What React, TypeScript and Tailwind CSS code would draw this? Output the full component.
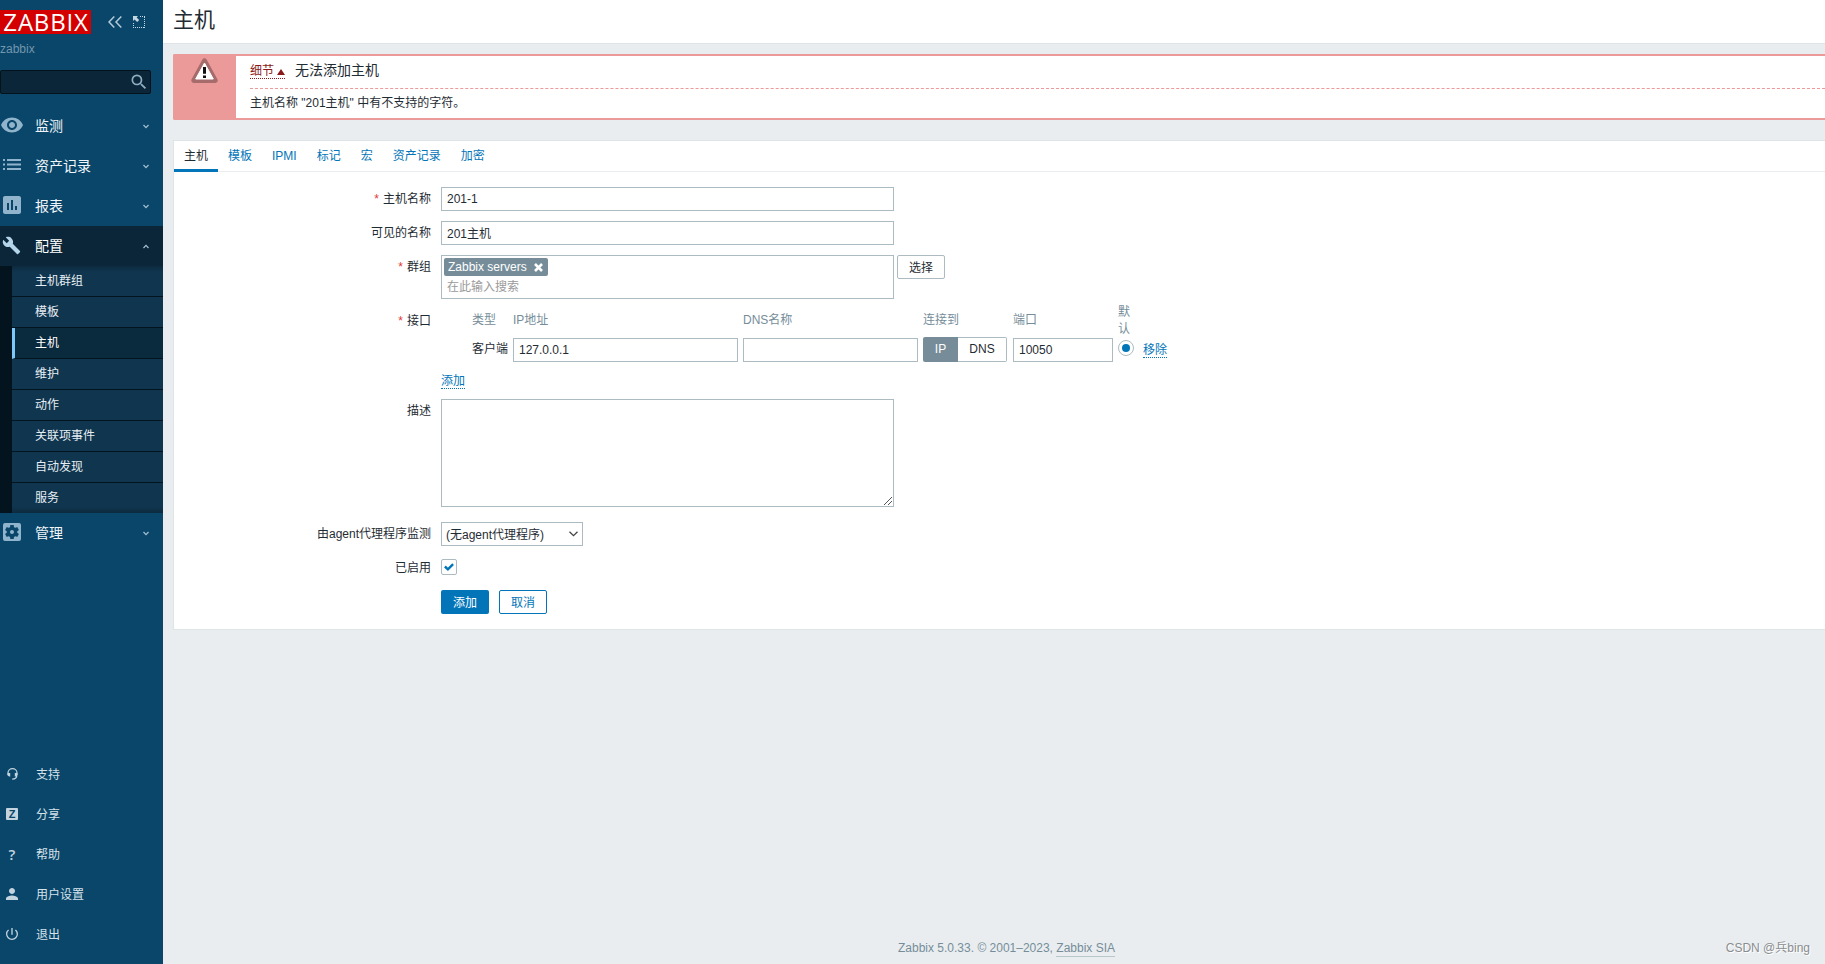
import React from "react";
import {
  MdVisibility,
  MdAssessment,
  MdBuild,
  MdSettingsApplications,
  MdPerson,
  MdPowerSettingsNew,
  MdSearch,
} from "react-icons/md";

const CONFIG_ITEMS = ["主机群组", "模板", "主机", "维护", "动作", "关联项事件", "自动发现", "服务"];
const TABS = ["主机", "模板", "IPMI", "标记", "宏", "资产记录", "加密"];

function Chevron({ up = false }: { up?: boolean }) {
  return (
    <svg className="ml-auto mr-[14px] mt-px h-[5px] w-[6px]" viewBox="0 0 6 5" fill="none" stroke="#a5c1d2" strokeWidth="1.2">
      <path d={up ? "M0.5 4 L3 1.3 L5.5 4" : "M0.5 1 L3 3.7 L5.5 1"} />
    </svg>
  );
}

function ListIcon() {
  return (
    <svg className="ml-[3px] h-3 w-[18px]" viewBox="0 0 18 12" fill="currentColor">
      <path d="M0 0 H2 V2 H0 Z M4 0 H18 V2 H4 Z M0 4.5 H2 V6.5 H0 Z M4 4.5 H18 V6.5 H4 Z M0 9 H2 V11 H0 Z M4 9 H18 V11 H4 Z" />
    </svg>
  );
}

function SupportIcon() {
  return (
    <svg className="h-3 w-[11px]" viewBox="0 0 11 12" fill="none" stroke="currentColor">
      <path d="M1 7 V5 A4.5 4.3 0 0 1 10 5 V7" strokeWidth="1.2" />
      <path d="M1.4 5 H3.2 V8.6 H2.2 L0.6 7.4 V5 Z M7.8 5 H10.4 V7.4 L9.2 8.6 H7.8 Z" fill="currentColor" stroke="none" />
      <path d="M9.8 7.5 C9.8 10 8.6 11 5.2 11.2" strokeWidth="1.3" />
    </svg>
  );
}

function MainItem({ icon, label, active = false }: { icon: React.ReactNode; label: string; active?: boolean }) {
  return (
    <div
      className={
        active
          ? "flex h-10 items-center bg-[#0a2638] text-[14px] text-white"
          : "flex h-10 items-center text-[14px] text-[#f0f6fa]"
      }
    >
      <span className={active ? "w-[35px] text-[#b4d4ea]" : "w-[35px] pb-[2px] text-[#8fb4cc]"}>{icon}</span>
      <span>{label}</span>
      <Chevron up={active} />
    </div>
  );
}

function FootItem({ icon, label }: { icon: React.ReactNode; label: string }) {
  return (
    <div className="flex h-10 items-center text-[12px] text-[#d5e2ea]">
      <span className="flex w-6 justify-center pb-[2px] text-[#c3d4df]">{icon}</span>
      <span className="ml-3">{label}</span>
    </div>
  );
}

function Sidebar() {
  return (
    <aside className="flex h-full w-[163px] shrink-0 flex-col bg-[#0a466a]">
      <div className="mt-[10px] flex h-6 items-center">
        <div className="flex h-6 w-[91px] items-center justify-center bg-[#d40000] pl-px font-['Open_Sans'] text-[24px] leading-6 tracking-[0.8px] text-white">
          ZABBIX
        </div>
        <svg className="ml-[17px] h-3 w-[14px]" viewBox="0 0 14 12" fill="none" stroke="#b3cad8" strokeWidth="1.5">
          <path d="M6.3 0.5 L1 6 L6.3 11.5 M13.3 0.5 L8 6 L13.3 11.5" />
        </svg>
        <svg className="ml-[11px] h-3 w-3" viewBox="0 0 12 12" fill="none" stroke="#c5d7e2">
          <path d="M7 0.5 H12 M0.5 7 V12 M0 11.5 H12 M11.5 1 V12" strokeDasharray="1 1" />
          <path d="M0 0 H5 L3.6 1.4 L6.2 4 L4.2 6 L1.5 3.4 L0 5 Z" fill="#c5d7e2" stroke="none" />
        </svg>
      </div>
      <div className="mt-[7px] h-4 text-[12px] leading-4 text-[#7397ad]">zabbix</div>
      <div className="mt-[13px] flex h-6 w-[151px] items-center justify-end rounded-[2px] border border-[#04121c] bg-[#0a2638] pr-px text-[#8eafc3]">
        <MdSearch size={20} />
      </div>
      <nav className="mt-3">
        <MainItem icon={<MdVisibility size={24} />} label="监测" />
        <MainItem icon={<ListIcon />} label="资产记录" />
        <MainItem icon={<MdAssessment size={24} />} label="报表" />
        <MainItem icon={<MdBuild size={19} className="mb-[2px] ml-[2px]" />} label="配置" active />
        <ul className="bg-[#04141e] pl-3">
          {CONFIG_ITEMS.map((item, i) => (
            <li
              key={item}
              className={
                i === 2
                  ? "flex h-[31px] items-center border-b border-l-[3px] border-b-[#04141e] border-l-[#7cc8f8] bg-[#0a2a3e] pl-5 text-[12px] text-white"
                  : i === 7
                    ? "flex h-[30px] items-center bg-linear-to-t from-[#0c2a3f] to-[#10354e] to-20% pl-[23px] text-[12px] text-[#e6eff5]"
                    : i === 0
                      ? "flex h-[31px] items-center border-b border-[#04141e] bg-linear-to-b from-[#0c2a3f] to-[#10354e] to-20% pl-[23px] text-[12px] text-[#e6eff5]"
                      : "flex h-[31px] items-center border-b border-[#04141e] bg-[#10354e] pl-[23px] text-[12px] text-[#e6eff5]"
              }
            >
              {item}
            </li>
          ))}
        </ul>
        <MainItem icon={<MdSettingsApplications size={24} />} label="管理" />
      </nav>
      <nav className="mt-auto pb-[9px]">
        <FootItem icon={<SupportIcon />} label="支持" />
        <FootItem
          icon={
            <span className="flex h-3 w-3 items-center justify-center rounded-[1px] bg-[#c3d4df] text-[11px] leading-3 font-black text-[#0a466a]">
              Z
            </span>
          }
          label="分享"
        />
        <FootItem icon={<span className="font-['Open_Sans'] text-[15px] leading-4 font-semibold">?</span>} label="帮助" />
        <FootItem icon={<MdPerson size={18} />} label="用户设置" />
        <FootItem icon={<MdPowerSettingsNew size={16} />} label="退出" />
      </nav>
    </aside>
  );
}

function ErrorMessage() {
  return (
    <section className="ml-[10px] mt-[10px] flex h-[66px] rounded-l-[2px] border-y-2 border-[#ec9999] bg-white">
      <div className="-my-[2px] flex w-[63px] shrink-0 justify-center rounded-l-[2px] bg-[#ec9999] pt-1">
        <svg className="h-[26px] w-[27px] shrink-0" viewBox="0 0 27 26">
          <path d="M13.5 2.7 L24.3 22.5 H2.7 Z" fill="#fff" stroke="#a66b6b" strokeWidth="4.8" strokeLinejoin="round" />
          <path d="M13.5 5 L22.3 21 H4.7 Z" fill="#fff" stroke="#fff" strokeLinejoin="round" />
          <path d="M12 9 H15 V15.8 H12 Z M12 17.5 H15 V20 H12 Z" fill="#111" />
        </svg>
      </div>
      <div className="min-w-0 grow pl-[14px] text-[#1f2c33]">
        <div className="flex h-[33px] items-start border-b border-dashed border-[#ec9999] pt-[6px]">
          <span className="flex h-[17px] items-center border-b border-dotted border-[#8b1a1a] pt-px text-[12px] leading-4 text-[#8b1a1a]">
            细节
            <svg className="ml-[3px] mt-[2px] h-[6px] w-2" viewBox="0 0 8 6" fill="#8b1a1a">
              <path d="M4 0 L8 6 H0 Z" />
            </svg>
          </span>
          <span className="ml-[10px] text-[14px] leading-[17px]">无法添加主机</span>
        </div>
        <div className="mt-[6px] text-[12px] leading-4">主机名称 "201主机" 中有不支持的字符。</div>
      </div>
    </section>
  );
}

function Row({
  label,
  required = false,
  className,
  children,
}: {
  label?: string;
  required?: boolean;
  className: string;
  children: React.ReactNode;
}) {
  return (
    <div className={`flex items-start ${className}`}>
      <label className="mr-[10px] w-[257px] shrink-0 text-right leading-6">
        {required && <span className="mr-1 text-[#e33734]">*</span>}
        {label}
      </label>
      {children}
    </div>
  );
}

function HostForm() {
  return (
    <div className="pt-[15px]">
      <Row label="主机名称" required className="h-6">
        <input className="h-6 w-[453px] border border-[#acbbc2] px-[5px] outline-none" defaultValue="201-1" />
      </Row>
      <Row label="可见的名称" className="mt-[10px] h-6">
        <input className="h-6 w-[453px] border border-[#acbbc2] px-[5px] pb-px outline-none" defaultValue="201主机" />
      </Row>
      <Row label="群组" required className="mt-[10px] h-11">
        <div className="h-11 w-[453px] border border-[#acbbc2] px-[2px] pt-[2px]">
          <div className="flex h-[18px] w-[104px] items-center rounded-[2px] bg-[#768d99] pl-1 leading-[18px] text-white">
            Zabbix servers
            <svg className="ml-[7px] h-[9px] w-[9px]" viewBox="0 0 9 9" stroke="#fff" strokeWidth="2.6">
              <path d="M1 1 L8 8 M8 1 L1 8" />
            </svg>
          </div>
          <div className="mt-[3px] pl-[3px] leading-4 text-[#9a9a9a]">在此输入搜索</div>
        </div>
        <button className="ml-[3px] h-6 w-12 rounded-[2px] border border-[#acbbc2] pt-px">选择</button>
      </Row>
      <div className="mt-1 flex items-start">
        <label className="mr-[10px] w-[257px] shrink-0 pt-[6px] text-right leading-6">
          <span className="mr-1 text-[#e33734]">*</span>接口
        </label>
        <div>
          <div className="flex h-[34px] items-center pl-[31px] text-[#768d99]">
            <span className="w-[41px]">类型</span>
            <span className="w-[230px]">IP地址</span>
            <span className="w-[180px]">DNS名称</span>
            <span className="w-[90px]">连接到</span>
            <span className="w-[105px]">端口</span>
            <span className="w-4 pt-[2px] leading-[17px]">默<br />认</span>
          </div>
          <div className="flex h-[25px] items-end pl-[31px]">
            <span className="mb-[5px] w-[41px] leading-4 whitespace-nowrap">客户端</span>
            <input className="h-6 w-[225px] border border-[#acbbc2] px-[5px] outline-none" defaultValue="127.0.0.1" />
            <input className="ml-[5px] h-6 w-[175px] border border-[#acbbc2] px-[5px] outline-none" />
            <div className="ml-[5px] flex h-[25px] w-[84px] leading-[24px]">
              <span className="w-[35px] rounded-l-[2px] bg-[#768d99] text-center text-white">IP</span>
              <span className="grow rounded-r-[2px] border border-l-0 border-[#acbbc2] text-center leading-[22px]">DNS</span>
            </div>
            <input className="ml-[6px] h-6 w-[100px] border border-[#acbbc2] px-[5px] outline-none" defaultValue="10050" />
            <span className="mb-[6px] ml-[5px] flex h-4 w-4 items-center justify-center rounded-full border border-[#acbbc2]">
              <span className="h-2 w-2 rounded-full bg-[#0275b8]" />
            </span>
            <a className="mb-1 ml-[9px] h-[17px] border-b border-dotted border-[#0275b8] leading-[18px] text-[#0275b8]">移除</a>
          </div>
          <a className="mt-[10px] block h-[17px] w-6 border-b border-dotted border-[#0275b8] leading-[19px] text-[#0275b8]">添加</a>
        </div>
      </div>
      <Row label="描述" className="mt-[10px] h-[108px]">
        <div className="flex h-[108px] w-[453px] items-end justify-end border border-[#acbbc2] p-px">
          <svg className="h-2 w-2" viewBox="0 0 8 8" stroke="#555" fill="none">
            <path d="M0 8 L8 0 M4 8 L8 4" />
          </svg>
        </div>
      </Row>
      <Row label="由agent代理程序监测" className="mt-[15px] h-6">
        <div className="flex h-6 w-[142px] items-center justify-between border border-[#acbbc2] pl-1 pr-[4px]">
          <span className="pt-px">(无agent代理程序)</span>
          <svg className="h-[6px] w-[9px]" viewBox="0 0 9 6" fill="none" stroke="#444" strokeWidth="1.3">
            <path d="M0.5 0.7 L4.5 4.7 L8.5 0.7" />
          </svg>
        </div>
      </Row>
      <Row label="已启用" className="mt-[10px] h-6">
        <span className="mt-[3px] flex h-4 w-4 items-center justify-center rounded-[2px] border border-[#acbbc2]">
          <svg className="h-[8px] w-[10px]" viewBox="0 0 10 8" fill="none" stroke="#0275b8" strokeWidth="2.4">
            <path d="M0.9 3.5 L3.9 6.3 L9.1 1.1" />
          </svg>
        </span>
      </Row>
      <Row className="mt-[10px] h-6">
        <button className="h-6 w-12 rounded-[2px] bg-[#0275b8] pt-[2px] text-white">添加</button>
        <button className="ml-[10px] h-6 w-12 rounded-[2px] border border-[#0275b8] pt-[2px] text-[#0275b8]">取消</button>
      </Row>
    </div>
  );
}

export default function App() {
  return (
    <div className="flex h-[964px] w-[1825px] overflow-hidden bg-[#e9edf0] font-['Liberation_Sans','Noto_Sans_CJK_SC',sans-serif] text-[12px] text-[#1f2c33]">
      <Sidebar />
      <div className="flex min-w-0 grow flex-col">
        <header className="h-11 border-b border-[#dfe4e7] bg-white pl-[10px] text-[21px] leading-[40px]">
          <h1>主机</h1>
        </header>
        <ErrorMessage />
        <main className="ml-[10px] mt-5 h-[490px] border-y border-l border-[#dfe4e7] bg-white">
          <div className="flex h-[31px] border-b border-[#ebeef0]">
            {TABS.map((tab, i) => (
              <span
                key={tab}
                className={
                  i === 0
                    ? "h-[31px] border-b-[3px] border-[#0275b8] px-[10px] leading-[31px]"
                    : "h-[31px] px-[10px] leading-[31px] text-[#0275b8]"
                }
              >
                {tab}
              </span>
            ))}
          </div>
          <HostForm />
        </main>
        <footer className="mt-auto flex h-[23px] items-start text-[#768d99]">
          <div className="ml-[735px] leading-[15px]">
            Zabbix 5.0.33. © 2001–2023, <a className="inline-block border-b border-[#b8c6ce]">Zabbix SIA</a>
          </div>
          <div className="ml-auto mr-[15px] text-[12px] leading-[14px] text-[#8a8d8f] [text-shadow:1px_1px_0_#ffffff]">CSDN @兵bing</div>
        </footer>
      </div>
    </div>
  );
}
